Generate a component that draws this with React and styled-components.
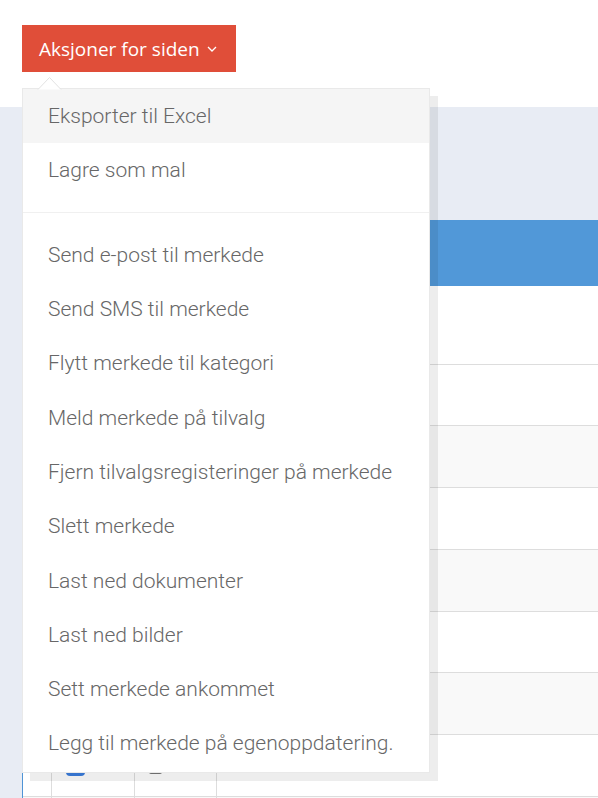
import styled, { createGlobalStyle } from "styled-components";

const GlobalStyle = createGlobalStyle`
  html, body {
    margin: 0;
    padding: 0;
    background: #ffffff;
    overflow: hidden;
  }
  * {
    box-sizing: border-box;
  }
`;

const MENU_ITEMS = [
  ["Eksporter til Excel", "Lagre som mal"],
  [
    "Send e-post til merkede",
    "Send SMS til merkede",
    "Flytt merkede til kategori",
    "Meld merkede på tilvalg",
    "Fjern tilvalgsregisteringer på merkede",
    "Slett merkede",
    "Last ned dokumenter",
    "Last ned bilder",
    "Sett merkede ankommet",
    "Legg til merkede på egenoppdatering.",
  ],
];

const Page = styled.div`
  width: 598px;
  height: 798px;
  overflow: hidden;
  display: flex;
  flex-direction: column;
`;

const TopBar = styled.div`
  flex-shrink: 0;
  height: 107px;
  background: #ffffff;
  padding: 25px 0 0 22px;
  position: relative;
  z-index: 2;
`;

const ActionsWrap = styled.div`
  position: relative;
  display: inline-block;
`;

const ActionsButton = styled.button`
  display: flex;
  align-items: center;
  gap: 7px;
  height: 47px;
  padding: 0 19px 0 17px;
  border: none;
  border-radius: 0;
  background: #e04e39;
  color: #ffffff;
  font-family: "Open Sans", "Noto Sans", sans-serif;
  font-size: 19px;
  cursor: pointer;
`;

const Menu = styled.ul`
  position: absolute;
  top: 63px;
  left: 0;
  width: 408px;
  margin: 0;
  padding: 0 0 1px;
  list-style: none;
  background: #ffffff;
  border: 1px solid #e9e9e9;
  box-shadow: 8px 8px 0 0 rgba(0, 0, 0, 0.07);
`;

const Caret = styled.svg`
  position: absolute;
  top: -13px;
  left: 14px;
`;

const MenuItem = styled.li`
  height: 54.3px;
  display: flex;
  align-items: center;
  padding-left: 25px;
  background: ${(p) => (p.$active ? "#f5f5f5" : "transparent")};
  color: #676767;
  font-family: "Roboto", "Liberation Sans", sans-serif;
  font-weight: 300;
  font-size: 21px;
  white-space: nowrap;
`;

const Divider = styled.li`
  height: 1px;
  margin: 14px 0 15px;
  background: #f0f0f0;
`;

const Body = styled.div`
  flex: 1;
  min-height: 0;
  background: #e8ecf4;
  padding: 113px 0 0 22px;
`;

const Table = styled.div`
  width: 620px;
  background: #ffffff;
  border-left: 1px solid #4f94d6;
`;

const TableHead = styled.div`
  height: 66px;
  background: #5198d8;
`;

const Row = styled.div`
  display: grid;
  grid-template-columns: 29px 83px 82px 1fr;
  height: ${(p) => p.$h || 61.75}px;
  border-bottom: 1px solid #dddddd;
  background: ${(p) => (p.$alt ? "#f9f9f9" : "#ffffff")};
`;

const Cell = styled.div`
  display: flex;
  align-items: center;
  padding-left: 14px;
  border-right: 1px solid #dddddd;
  &:last-child {
    border-right: none;
  }
`;

const Check = styled.span`
  width: 19px;
  height: 19px;
  margin-top: 2px;
  border-radius: 4px;
  background: #3b7ddd;
`;

const DocIcon = styled.span`
  width: 13px;
  height: 16px;
  border: 2px solid #777;
  border-radius: 2px;
  margin-top: 2px;
`;

export default function App() {
  return (
    <Page>
      <GlobalStyle />
      <TopBar>
        <ActionsWrap>
          <ActionsButton>
            Aksjoner for siden
            <svg width="10" height="6" viewBox="0 0 10 6">
              <path d="M1 1l4 4 4-4" fill="none" stroke="#fff" strokeWidth="1.3" />
            </svg>
          </ActionsButton>
          <Menu>
            <Caret width="26" height="14" viewBox="0 0 26 14">
              <polygon points="1,13.5 12.5,1.5 24,13.5" fill="#fff" />
              <polyline points="1,13.5 12.5,1.5 24,13.5" fill="none" stroke="#e2e2e2" />
            </Caret>
            {MENU_ITEMS[0].map((t, i) => (
              <MenuItem key={t} $active={i === 0}>
                {t}
              </MenuItem>
            ))}
            <Divider />
            {MENU_ITEMS[1].map((t) => (
              <MenuItem key={t}>{t}</MenuItem>
            ))}
          </Menu>
        </ActionsWrap>
      </TopBar>
      <Body>
        <Table>
          <TableHead />
          <Row $h={78.5}>
            <Cell />
            <Cell />
            <Cell />
            <Cell />
          </Row>
          {Array.from({ length: 8 }).map((_, i) => (
            <Row key={i} $alt={i % 2 === 1}>
              <Cell />
              <Cell>{i === 6 && <Check />}</Cell>
              <Cell>{i === 6 && <DocIcon />}</Cell>
              <Cell />
            </Row>
          ))}
        </Table>
      </Body>
    </Page>
  );
}
